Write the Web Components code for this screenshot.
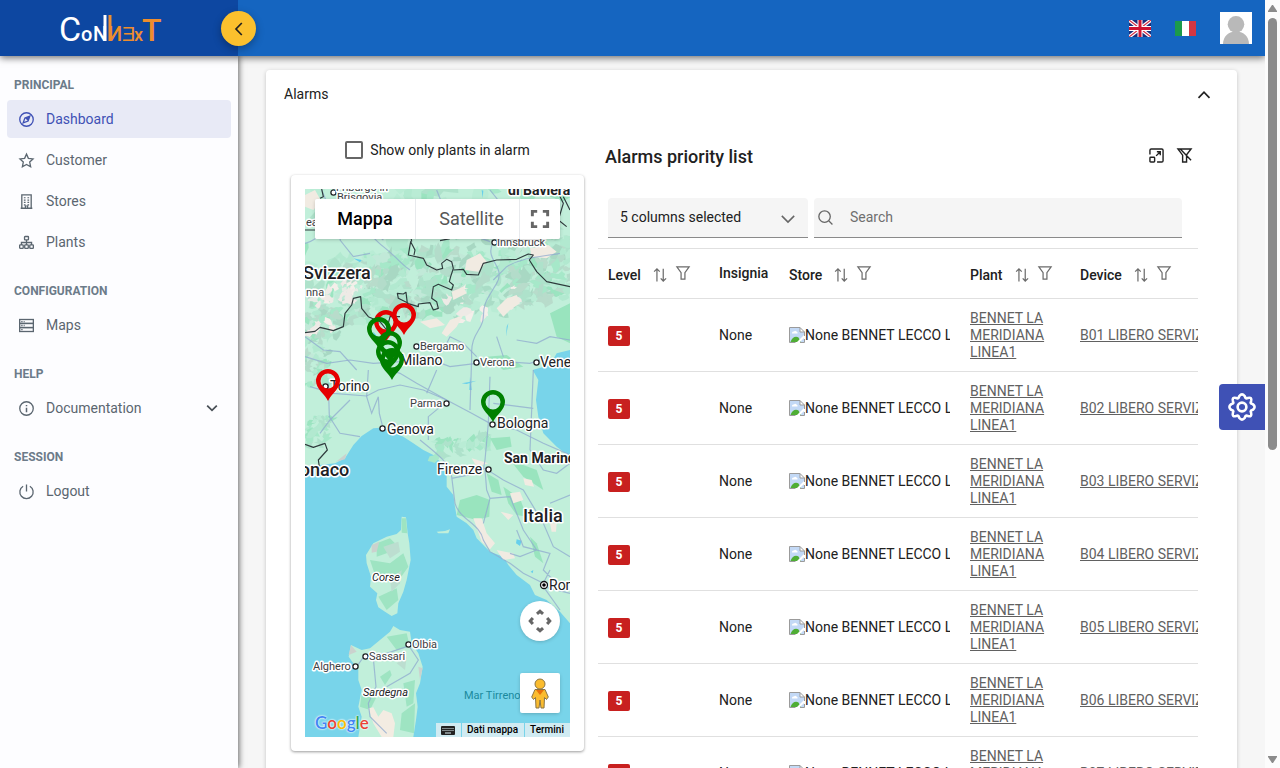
<!DOCTYPE html>
<html lang="en">
<head>
<meta charset="utf-8">
<meta name="viewport" content="width=device-width, initial-scale=1">
<title>Connext</title>
<style>
  html, body { margin: 0; height: 100%; }
  body { font: 14px/17px Roboto, "Liberation Sans", sans-serif; color: #212121; background: #f6f6f6; overflow: hidden; }
</style>
</head>
<body>
<app-shell>
  <app-header slot="header"></app-header>
  <side-nav slot="nav">
    <nav-section label="PRINCIPAL">
      <nav-item icon="compass" active>Dashboard</nav-item>
      <nav-item icon="star">Customer</nav-item>
      <nav-item icon="building">Stores</nav-item>
      <nav-item icon="sitemap">Plants</nav-item>
    </nav-section>
    <nav-section label="CONFIGURATION">
      <nav-item icon="server">Maps</nav-item>
    </nav-section>
    <nav-section label="HELP">
      <nav-item icon="info" expandable>Documentation</nav-item>
    </nav-section>
    <nav-section label="SESSION">
      <nav-item icon="power">Logout</nav-item>
    </nav-section>
  </side-nav>
  <expansion-panel heading="Alarms">
    <plants-panel></plants-panel>
    <alarms-panel></alarms-panel>
  </expansion-panel>
  <settings-button slot="overlay"></settings-button>
  <page-scrollbar slot="scrollbar"></page-scrollbar>
</app-shell>

<script>
const define = (name, html, setup) => {
  const template = document.createElement('template');
  template.innerHTML = html;
  customElements.define(name, class extends HTMLElement {
    constructor() {
      super();
      this.attachShadow({ mode: 'open' }).append(template.content.cloneNode(true));
    }
    connectedCallback() { if (setup) setup(this, this.shadowRoot); }
  });
};

/* ---- icons, each on a 16 unit grid ---- */
const ICONS = {
  compass: '<circle cx="8" cy="8" r="7.2"/><path d="M11.6 4.4 9.7 9.7 4.4 11.6 6.3 6.3Z"/><path d="M6.3 6.3 9.7 9.7 11.6 4.4Z" fill="currentColor" stroke="none"/>',
  star: '<path d="M8 1.2 10 5.7 15 6.3 11.4 9.7 12.4 14.7 8 12.2 3.6 14.7 4.6 9.7 1 6.3 6 5.7Z"/>',
  building: '<path d="M3 15V1H13V15M1.8 15.2H14.2"/><path d="M5.2 4H7M9 4H10.8M5.2 6.5H7M9 6.5H10.8M5.2 9H7M9 9H10.8M5.2 11.5H7M9 11.5H10.8M6.8 15V12.8H9.2V15" stroke-width="1.3"/>',
  sitemap: '<rect x="5.9" y="1.6" width="4.2" height="3.6" rx=".6"/><rect x=".7" y="10.6" width="3.8" height="3.6" rx=".6"/><rect x="6.1" y="10.6" width="3.8" height="3.6" rx=".6"/><rect x="11.5" y="10.6" width="3.8" height="3.6" rx=".6"/><path d="M8 5.2V10.6M2.6 10.6V8H13.4V10.6"/>',
  server: '<rect x=".7" y="1.6" width="14.6" height="4.2"/><rect x=".7" y="5.8" width="14.6" height="4.4"/><rect x=".7" y="10.2" width="14.6" height="4.2"/><path d="M2.4 3.8H3.8M2.4 8H3.8M2.4 12.3H3.8M5 3.8H6M5 8H6" stroke-width="1.4"/>',
  info: '<circle cx="8" cy="8" r="7.2"/><path d="M8 7.2V12M8 4.2V5.6" stroke-width="1.6"/>',
  power: '<path d="M8 .6V8M4.4 2.4A7.1 7.1 0 1 0 11.6 2.4"/>',
  down: '<path d="M2.5 5.2 8 10.7 13.5 5.2"/>',
  up: '<path d="M2.5 10.8 8 5.2 13.5 10.8"/>',
  left: '<path d="M10.8 2 5 8 10.8 14"/>',
  search: '<circle cx="7" cy="7" r="6.1"/><path d="M11.4 11.4 15.4 15.4"/>',
  sort: '<path d="M4.5 15.3V1.2M1.3 4.2 4.5 1 7.7 4.2M11.7.8V14.8M8.8 11.9 11.7 14.9 15 11.9"/>',
  filter: '<path d="M1 1H15L10.2 7.6V15H5.8V7.6Z"/>',
  filterOff: '<path d="M1 1H15L10.2 7.2V15H6V7.6Z M3.2.8 15 13"/>',
  expand: '<path d="M1 6.8V2.4Q1 1 2.4 1H13.6Q15 1 15 2.4V13.6Q15 15 13.6 15H8.6"/><rect x="1" y="9.8" width="5" height="5.2" rx=".8"/><path d="M7.6 8.4 12 4M8.4 4H12V7.8"/>',
  cog: '<circle cx="8" cy="8" r="2.5"/><path d="M6.5 1.7Q8-.1 9.5 1.7L10 2.8Q10.5 3.3 11.4 2.8 13.8 2.2 13.2 4.6 12.7 5.5 13.2 6L14.3 6.5Q16.1 8 14.3 9.5L13.2 10Q12.7 10.5 13.2 11.4 13.8 13.8 11.4 13.2 10.5 12.7 10 13.2L9.5 14.3Q8 16.1 6.5 14.3L6 13.2Q5.5 12.7 4.6 13.2 2.2 13.8 2.8 11.4 3.3 10.5 2.8 10L1.7 9.5Q-.1 8 1.7 6.5L2.8 6Q3.3 5.5 2.8 4.6 2.2 2.2 4.6 2.8 5.5 3.3 6 2.8Z"/>',
  fullscreen: '<path d="M1.2 5.5V1.2H5.5M10.5 1.2H14.8V5.5M14.8 10.5V14.8H10.5M5.5 14.8H1.2V10.5"/>',
  pan: '<path d="M5.8 2.8 8 .9 10.2 2.8M5.8 13.2 8 15.1 10.2 13.2M2.8 5.8.9 8 2.8 10.2M13.2 5.8 15.1 8 13.2 10.2"/>'
};
define('ui-icon', `
  <style>
    :host { display: inline-block; flex: none; width: var(--size, 15px); height: var(--size, 15px); }
    svg { display: block; width: 100%; height: 100%; overflow: visible; fill: none; stroke: currentColor; stroke-width: var(--stroke, 1.4); }
  </style>
  <svg viewBox="0 0 16 16" aria-hidden="true"></svg>`,
  (el, root) => { root.querySelector('svg').innerHTML = ICONS[el.getAttribute('name')] || ''; });

/* ---- page frame ---- */
define('app-shell', `
  <style>
    :host { display: grid; grid-template-columns: minmax(0, 1fr) 15px; height: 100vh; }
    .app { position: relative; display: grid; grid-template-columns: 238px minmax(0, 1fr); grid-template-rows: 56px minmax(0, 1fr); overflow: hidden; }
    slot[name=header]::slotted(*) { grid-column: 1 / -1; z-index: 3; }
    slot[name=nav]::slotted(*) { z-index: 2; }
    main { overflow-y: auto; scrollbar-width: none; padding: 14px 28px; }
  </style>
  <div class="app">
    <slot name="header"></slot>
    <slot name="nav"></slot>
    <main><slot></slot></main>
    <slot name="overlay"></slot>
  </div>
  <slot name="scrollbar"></slot>`);

define('page-scrollbar', `
  <style>
    :host { display: flex; flex-direction: column; align-items: center; justify-content: space-between; background: #fcfcfc; padding: 5px 0; box-sizing: border-box; }
    svg { display: block; fill: #8b8b8b; }
    .track { flex: 1; width: 9px; margin: 6px 0; }
    .thumb { height: 59%; border-radius: 5px; background: #8b8b8b; }
  </style>
  <svg width="9" height="7" viewBox="0 0 9 7" aria-hidden="true"><path d="M4 0H5L9 6V7H0V6Z"/></svg>
  <div class="track"><div class="thumb"></div></div>
  <svg width="9" height="7" viewBox="0 0 9 7" aria-hidden="true"><path d="M0 0H9V1L5 7H4L0 1Z"/></svg>`);

define('app-header', `
  <style>
    :host { display: grid; grid-template-columns: 238px minmax(0, 1fr); background: #1565c0; box-shadow: 0 2px 7px rgba(0,0,0,.55); }
    .brand { position: relative; display: flex; justify-content: center; align-items: center; background: #0d47a1; padding-right: 18px; }
    .brand svg { display: block; overflow: visible; }
    .collapse { position: absolute; right: -18px; top: 11px; width: 35px; height: 35px; border: 0; border-radius: 50%; padding: 0; display: grid; place-items: center; background: #fbc02d; color: #212121; box-shadow: 0 3px 8px rgba(0,0,0,.3); --size: 16px; --stroke: 1.7; }
    .tools { display: flex; align-items: center; justify-content: flex-end; padding-right: 13px; gap: 24px; }
    .tools button { border: 0; padding: 0; background: none; display: block; }
    .tools svg { display: block; }
    .text { font-family: Roboto, sans-serif; font-weight: 500; }
  </style>
  <div class="brand">
    <svg width="100" height="32" viewBox="0 0 100 32" role="img" aria-label="Connext">
      <g class="text" font-size="20">
        <g fill="#fff">
          <text x="-1" y="29" font-size="34" font-weight="400">C</text><text x="21" y="29">o</text><text x="33" y="29">N</text>
        </g>
        <g fill="#ee8d2e">
          <text x="48" y="29">И</text><text x="62" y="29">Ǝ</text><text x="74" y="29" font-size="18">x</text><text x="82" y="29" font-size="32">T</text>
        </g>
      </g>
      <path d="M45 3V29" stroke="#fff" stroke-width="3"/><path d="M50 3V29" stroke="#ee8d2e" stroke-width="3"/>
    </svg>
    <button class="collapse" aria-label="Collapse menu"><ui-icon name="left"></ui-icon></button>
  </div>
  <div class="tools">
    <button aria-label="English">
      <svg width="22" height="17" viewBox="0 0 22 17"><path fill="#1b2f7b" d="M0 0H22V17H0Z"/><path d="M0 0 22 17M22 0 0 17" stroke="#fff" stroke-width="3.6"/><path d="M0 0 22 17M22 0 0 17" stroke="#d22f46" stroke-width="1.2"/><path d="M11 0V17M0 8.5H22" stroke="#fff" stroke-width="5"/><path d="M11 0V17M0 8.5H22" stroke="#cf1431" stroke-width="3"/></svg>
    </button>
    <button aria-label="Italiano">
      <svg width="21" height="15" viewBox="0 0 21 15"><path fill="#1b9a4b" d="M0 0H7V15H0Z"/><path fill="#fff" d="M7 0H14V15H7Z"/><path fill="#d33643" d="M14 0H21V15H14Z"/></svg>
    </button>
    <button aria-label="Profile">
      <svg width="32" height="32" viewBox="0 0 32 32"><path fill="#fff" d="M0 0H32V32H0Z"/><g fill="#b9b9b9"><circle cx="16" cy="12.3" r="8.3"/><path d="M3 32C3 24 9 19.500 16 19.500S29 24 29 32Z"/></g></svg>
    </button>
  </div>`);

/* ---- navigation ---- */
define('side-nav', `
  <style>
    :host { display: block; background: #fdfdff; padding: 14px 7px; box-shadow: 1px 0 6px rgba(0,0,0,.6); }
    nav { display: flex; flex-direction: column; gap: 15px; }
  </style>
  <nav aria-label="Main"><slot></slot></nav>`);
define('nav-section', `
  <style>
    :host { display: block; }
    h2 { margin: 0; padding-left: 7px; font-size: 12px; line-height: 30px; font-weight: 700; color: #6c7b89; }
    div { display: flex; flex-direction: column; gap: 3px; }
  </style>
  <h2></h2><div><slot></slot></div>`,
  (el, root) => { root.querySelector('h2').textContent = el.getAttribute('label'); });
define('nav-item', `
  <style>
    :host { display: block; color: #5b6670; }
    a { display: flex; align-items: center; height: 38px; padding: 0 12px; gap: 12px; border-radius: 4px; color: inherit; text-decoration: none; }
    .label { flex: 1; }
    :host([active]) { color: #3f51b5; }
    :host([active]) a { background: #e8eaf6; }
    .more { display: none; --stroke: 2; --size: 14px; color: #495057; }
    :host([expandable]) .more { display: block; }
  </style>
  <a href="#"><ui-icon class="lead"></ui-icon><span class="label"><slot></slot></span><ui-icon class="more" name="down"></ui-icon></a>`,
  (el, root) => {
    const lead = document.createElement('ui-icon');
    lead.setAttribute('name', el.getAttribute('icon'));
    root.querySelector('.lead').replaceWith(lead);
  });

/* ---- expansion panel ---- */
define('expansion-panel', `
  <style>
    :host { display: block; background: #fff; border-radius: 4px; box-shadow: 0 1px 4px rgba(0,0,0,.2); }
    button { display: flex; justify-content: space-between; align-items: center; width: 100%; height: 49px; padding: 0 25px 0 18px; border: 0; background: none; font: inherit; color: #212121; --size: 16px; --stroke: 1.7; }
    .body { display: grid; grid-template-columns: 293px minmax(0, 1fr); gap: 14px; align-items: start; padding: 6px 39px 25px 25px; }
  </style>
  <button aria-expanded="true"><span></span><ui-icon name="up"></ui-icon></button>
  <div class="body"><slot></slot></div>`,
  (el, root) => { root.querySelector('span').textContent = el.getAttribute('heading'); });

define('plants-panel', `
  <style>
    :host { display: block; }
    label { display: flex; align-items: center; justify-content: center; gap: 7px; height: 50px; }
    input { appearance: none; width: 18px; height: 18px; margin: 0; border: 2px solid #666; border-radius: 2px; background: #fff; }
    .card { padding: 14px; border-radius: 4px; background: #fff; box-shadow: 0 1px 3px rgba(0,0,0,.4); }
  </style>
  <label><input type="checkbox">Show only plants in alarm</label>
  <div class="card"><plants-map></plants-map></div>`);

/* ---- map ---- */
const facets = () => {
  let seed = 7;
  const rnd = () => (seed = (seed * 16807) % 2147483647) / 2147483647;
  const patch = (cx, cy, w, h, n, colors, size) => {
    let out = '';
    for (let i = 0; i < n; i++) {
      const x = cx + (rnd() - .5) * w, y = cy + (rnd() - .5) * h - (x - cx) * .12;
      const t = (rnd() - .7) * 2.4, scale = size * (.6 + rnd() * .8);
      let d = '';
      for (let k = 0; k < 9; k++) {
        const a = k / 9 * 6.283, r = scale * (.3 + rnd() * .9);
        const px = Math.cos(a) * r * 1.2, py = Math.sin(a) * r * .7;
        d += (k ? 'L' : 'M') + Math.round(x + px * Math.cos(t) - py * Math.sin(t)) + ' ' + Math.round(y + px * Math.sin(t) + py * Math.cos(t));
      }
      out += `<path d="${d}Z" fill="${colors[Math.floor(rnd() * colors.length)]}"/>`;
    }
    return out;
  };
  const green = ['#a6e8c9', '#9be4c0', '#b2e9d0', '#aee2cb', '#b9ecd5'];
  const alps = [...green, '#b8dccb', '#a8d8c3', '#c1e9d8', '#b3dcca'];
  return patch(440, 110, 800, 200, 60, green, 30)
    + patch(440, 330, 800, 200, 420, alps, 22)
    + patch(90, 470, 120, 90, 45, alps, 16)
    + patch(75, 590, 80, 110, 34, alps, 15)
    + patch(90, 780, 80, 90, 26, green, 15)
    + patch(140, 370, 150, 60, 20, ['#f4efea', '#eeeae6', '#e6ebe5'], 15)
    + patch(95, 470, 90, 40, 10, ['#f4efea', '#eeeae6'], 15)
    + patch(570, 400, 220, 100, 22, ['#f4efea', '#eeeae6', '#a9dcc6'], 16)
    + patch(510, 825, 170, 60, 30, green, 17);
};
const LABELS = [
  ['Friburgo in', 31, 2, 's'], ['Brisgovia', 32, 12, 's'], ['di Baviera', 203, 6, 'b'], ['Svizzera', -2, 90, 'c'],
  ['nna', 1, 107, 's'], ['Innsbruck', 192, 57, 's'], ['ea', 1, 37, 's'], ['Bergamo', 115, 161, 's'], ['Milano', 95, 176, 'l'],
  ['Verona', 175, 177, 's'], ['Venezia', 235, 178, 'l'], ['Torino', 25, 202, 'l'], ['Parma', 105, 218, 's'],
  ['Bologna', 192, 239, 'l'], ['Genova', 82, 245, 'l'], ['Monaco', -21, 287, 'c'], ['Firenze', 132, 285, 'l'],
  ['San Marino', 199, 274, 'b'], ['Italia', 218, 333, 'c'], ['Corse', 67, 392, 's i'], ['Roma', 244, 401, 'l'],
  ['Olbia', 107, 459, 's'], ['Sassari', 64, 471, 's'], ['Alghero', 8, 481, 's'], ['Sardegna', 58, 507, 's i'],
  ['Mar Tirreno', 159, 510, 's w']
];
const TOWNS = [[28, 3], [189, 53], [111, 157], [171, 173], [231, 173], [20, 197], [141, 214], [187, 235], [77, 239], [183, 280], [103, 455], [60, 467], [50, 477]];
const PINS = [[23, 212, '#e50000'], [81, 153, '#e50000'], [99, 146, '#e50000'], [74, 160, 'green'], [85, 174, 'green'], [83, 183, 'green'], [87, 191, 'green'], [188, 233, 'green']];
define('plants-map', `
  <style>
    :host { display: block; position: relative; height: 548px; overflow: hidden; background: #78d4ea; }
    .map { display: block; width: 100%; height: 100%; }
    text { font-family: Roboto, sans-serif; fill: #202124; stroke: #fff; stroke-width: 3px; stroke-linejoin: round; paint-order: stroke; }
    .s { font-size: 11px; fill: #3c4043; }
    .l { font-size: 14px; fill: #202124; } .b { font-size: 14px; font-weight: 700; } .c { font-size: 18px; font-weight: 500; }
    .i { font-style: italic; fill: #202124; } .w { fill: #1b8a9e; stroke: none; }
    .types { position: absolute; left: 10px; top: 10px; right: 10px; display: grid; grid-template-columns: 100px 1fr 40px; gap: 1px; height: 40px; box-shadow: 0 1px 4px -1px rgba(0,0,0,.3); background: #e8eaed; border-radius: 2px; overflow: hidden; }
    button { border: 0; padding: 0; background: #fff; font: 400 18px/40px Roboto, sans-serif; color: #565656; display: grid; place-items: center; }
    .types button[aria-pressed=true] { font-weight: 500; color: #000; }
    .types button[aria-pressed=false] { padding-left: 8px; }
    .types ui-icon { --size: 18px; --stroke: 2.6; color: #666; }
    .controls { position: absolute; right: 10px; bottom: 24px; display: grid; gap: 32px; }
    .controls button { width: 40px; height: 40px; border-radius: 2px; box-shadow: 0 1px 4px -1px rgba(0,0,0,.3); }
    .controls .pan { border-radius: 50%; --size: 22px; --stroke: 2.2; color: #666; }
    .legal { position: absolute; right: 0; bottom: 0; display: flex; gap: 1px; font-size: 10px; line-height: 14px; color: #000; }
    .legal > * { padding: 0 6px 0 5px; background: rgba(245,245,245,.7); color: inherit; text-decoration: none; display: flex; align-items: center; height: 14px; box-sizing: border-box; font: inherit; font-weight: 500; }
    .google { position: absolute; left: 10px; bottom: 4px; font: 600 17px/20px Lato, sans-serif; text-shadow: 0 0 2px #fff, 0 0 2px #fff; }
  </style>
  <svg class="map" role="img" aria-label="Map of plants">
    <g transform="translate(-15 -19) scale(.33333)">
      <path fill="#c1efda" d="M45 50H840V540L800 550 780 585 728 600 745 630 738 690 745 740 760 790 800 830 840 860V1360L810 1325 770 1290 735 1275 720 1245 680 1215 655 1185 640 1160 600 1145 585 1130 560 1105 550 1080 530 1060 500 1040 495 1010 490 975 470 950 470 915 455 880 430 855 400 840 370 820 340 800 300 780 270 773 250 775 215 798 190 825 165 865 135 880 90 885 45 898Z"/>
      <g id="relief"></g>
      <g fill="#99e4be">
        <path d="M510 990 560 975 600 990 598 1040 560 1050 500 1035Z"/><path d="M590 910 625 930 635 975 605 965Z"/><path d="M640 950 690 985 710 1040 680 1035 655 1000Z"/><path d="M600 805 660 800 665 830 620 840Z"/><path d="M720 1100 740 1120 760 1180 735 1160Z"/><path d="M590 560 650 555 700 590 640 600Z"/><path d="M780 430 840 400V520L800 500Z"/><path d="M660 870 740 900 760 960 700 920Z"/>
      </g>
      <g fill="#f1ebe2"><path d="M530 270 570 250 590 275 565 305 525 300Z"/><path d="M720 235 775 225 800 245 770 265 725 260Z"/><path d="M620 415 650 385 680 375 690 400 660 420 640 440Z"/><path d="M45 75 75 60 95 95 70 120 45 110Z"/><path d="M660 970 690 965 700 990 670 1000Z"/><path d="M632 1025 670 1035 655 1050Z"/><path d="M550 1045 575 1045 590 1090 615 1120 600 1138 575 1115Z"/><path d="M620 1140 670 1150 675 1165 640 1170Z"/><path d="M700 925 725 930 732 950 705 945Z"/><path d="M780 1060 800 1060 798 1085 785 1085Z"/><path d="M545 865 595 880 560 890Z"/><path d="M485 365 520 350 530 370 490 390Z"/><path d="M390 455 440 445 465 465 420 475Z"/><path d="M455 490 480 450 520 435 500 470 470 500Z"/></g>
      <path fill="#c1efda" d="M335 1040 348 1042 353 1090 358 1120 362 1170 350 1230 340 1265 325 1300 322 1330 305 1338 285 1325 265 1312 258 1290 262 1270 240 1250 243 1220 230 1180 228 1155 250 1120 290 1100 320 1092 333 1080ZM310 1368 330 1380 360 1385 365 1420 385 1450 398 1490 390 1540 378 1570 383 1610 378 1650 370 1701H205L215 1640 205 1610 215 1560 205 1530 205 1500 190 1480 176 1460 183 1425 215 1440 240 1435 270 1410 300 1385ZM440 1085 465 1083 480 1078 475 1090 445 1090Z"/>
      <g fill="#9ee4c2"><path d="M335 1045 348 1045 352 1090 335 1088Z"/><path d="M260 1120 300 1105 320 1125 290 1150 260 1160Z"/><path d="M240 1170 300 1180 340 1150 355 1190 320 1240 260 1230Z"/><path d="M265 1280 320 1255 325 1290 290 1320Z"/><path d="M290 1400 350 1390 360 1430 320 1440Z"/><path d="M270 1520 300 1500 305 1515 285 1545Z"/><path d="M340 1540 375 1530 370 1600 350 1610Z"/><path d="M215 1570 260 1580 240 1620 210 1610Z"/><path d="M335 1630 375 1600 372 1690 330 1680Z"/></g>
      <g fill="#bcded0"><path d="M280 1130 325 1115 330 1145 300 1165Z"/><path d="M300 1230 335 1200 330 1240 305 1265Z"/><path d="M320 1480 350 1460 345 1500Z"/></g>
      <g fill="#cbd2ce"><path d="M245 1125 268 1115 260 1145 245 1148Z"/><path d="M176 1455 183 1425 200 1445Z"/><path d="M385 1490 398 1495 390 1530Z"/><path d="M138 875 170 850 165 868Z"/></g>
      <path fill="#f3ece2" d="M235 1615 250 1612 265 1640 280 1620 305 1630 315 1660 310 1701H275L250 1660Z"/>
      <path fill="#66cfec" d="M190 265 215 270 210 277ZM250 485 262 500 258 520 250 505ZM575 60 580 62 578 85ZM650 470 655 460 648 500ZM515 640 560 632 530 642ZM540 620 545 660 538 660ZM680 1108 695 1112 690 1128 678 1120ZM722 1205 730 1200 728 1210ZM190 100 208 110 205 125Z"/>
      <g fill="none" stroke="#8fa9cf" stroke-width="3.5" stroke-opacity=".75">
        <path d="M45 220C90 210 100 170 150 150S230 190 280 230 330 280 360 300M95 60 120 120 170 160 150 210 190 260 240 250M440 60 460 110 520 130 560 200 600 215M600 60 640 110 700 90M180 60 200 140 280 210"/>
        <path d="M610 215C580 270 650 290 620 340S580 400 580 440 540 490 545 560L540 720M810 250C760 260 700 260 650 290L610 330"/>
        <path d="M45 560 110 580 180 570 250 580 330 575 400 560 480 590 560 580 640 575 720 580 780 560M60 650 130 670 230 678 265 660 330 645 400 660 470 690 545 730 600 760 680 780 760 820 840 855"/>
        <path d="M115 640 118 740 150 790 210 800M90 790 120 750 180 690M235 600 230 680 245 730 265 680M265 680 268 730 278 770M300 600 330 610 380 640 470 690M440 600 410 670M470 695 415 740 415 810M600 620 595 760 585 870 580 900M730 600 725 720 720 840M610 700 730 715"/>
        <path d="M390 810C440 850 480 880 485 920L495 1000C510 1050 570 1060 580 1110L600 1145 660 1180M485 925 560 910 585 895 640 930 700 960 760 1060 790 1130 840 1160M585 900 590 960 600 985 580 1060M600 985 660 980 700 1080 740 1140M720 840 760 900 800 910 840 880M740 1140 690 1160 660 1150M780 1000 840 975M680 1080 700 1130 780 1150 760 1200 800 1240M660 1180 700 1210 760 1240 780 1200M760 1250 840 1270M760 1250 810 1320M45 500 100 540 150 545 200 600M680 510 740 520 780 500 840 510M460 540 480 500 520 520 560 560M620 500 640 560"/>
        <path d="M225 1455 200 1490M250 1465 258 1550 235 1600 240 1640 290 1690M355 1425 385 1470 360 1510 290 1550M230 1460 290 1450 350 1430" />
      </g>
      <g fill="none" stroke="#2f3b3d" stroke-width="3.5" stroke-linejoin="round">
        <path d="M45 488 75 484 90 472 130 482 160 470 165 430 185 405 190 385 212 380 215 415 235 440 270 455 290 480 300 440 330 440M355 400 325 385 322 370 340 372 348 367 352 400 385 410 385 402 420 398 430 420 445 415 440 395 425 385 430 350 445 343 485 360 490 345 478 335 482 320 490 295 485 275 470 268 455 280 458 295 440 300 410 285 400 265 355 255 362 215 375 240 372 255"/>
        <path d="M490 300 520 298 530 313 565 315 580 280 620 270 680 268 715 252 730 255 718 270 740 305 770 335 840 350M95 57 100 80 90 85M45 180 75 180M45 823 70 832 105 820 112 840 85 870 88 890M800 60 820 100 805 150 830 170M820 80 840 120M280 190 330 200 360 180 365 215M450 212 480 206"/>
      </g>
    </g>
    <g id="towns" fill="#fff" stroke="#202124" stroke-width="1.3"></g>
    <circle cx="239" cy="396" r="3.5" fill="#fff" stroke="#111" stroke-width="1.3"/><circle cx="239" cy="396" r="1.8"/>
    <g id="labels"></g>
    <g id="pins"></g>
  </svg>
  <div class="types">
    <button aria-pressed="true">Mappa</button><button aria-pressed="false">Satellite</button>
    <button aria-label="Fullscreen"><ui-icon name="fullscreen"></ui-icon></button>
  </div>
  <div class="controls">
    <button class="pan" aria-label="Camera controls"><ui-icon name="pan"></ui-icon></button>
    <button aria-label="Street View">
      <svg width="18" height="31" viewBox="0 0 18 31"><g fill="#fbbc2e" stroke="#8a7444" stroke-width="1"><path d="M4 11.500H14L17.300 19 15.500 21.500 13.500 19.500 13 30H10L9 22 8 30H5L4.500 19.500 2.500 21.500.7 19Z"/><circle cx="9" cy="6" r="5"/></g><path fill="#e8710a" d="M5 12H13L9 17Z"/></svg>
    </button>
  </div>
  <div class="google" aria-label="Google"><span style="color:#4285f4">G</span><span style="color:#ea4335">o</span><span style="color:#fbbc05">o</span><span style="color:#4285f4">g</span><span style="color:#34a853">l</span><span style="color:#ea4335">e</span></div>
  <div class="legal">
    <button aria-label="Keyboard shortcuts"><svg width="14" height="9" viewBox="0 0 14 9"><rect width="14" height="9" rx="1" fill="#222"/><path d="M1.500 2.500H13M1.500 4.500H13" stroke="#dceef2" stroke-dasharray="1 1"/><path d="M4 7H10" stroke="#dceef2"/></svg></button>
    <button>Dati mappa</button><a href="#">Termini</a>
  </div>`,
  (el, root) => {
    root.querySelector('#relief').innerHTML = facets();
    root.querySelector('#towns').innerHTML = TOWNS.map(([x, y]) => `<circle cx="${x + .5}" cy="${y + .5}" r="2.6"/>`).join('');
    root.querySelector('#labels').innerHTML = LABELS.map(([t, x, y, c]) => `<text class="${c}" x="${x}" y="${y}">${t}</text>`).join('');
    root.querySelector('#pins').innerHTML = PINS.map(([x, y, c]) =>
      `<path transform="translate(${x} ${y})" fill="${c}" fill-rule="evenodd" d="M0 0C-3-7-12-12-12-20A12 12 0 0 1 12-20C12-12 3-7 0 0ZM0-27.500A7.500 7.500 0 0 0 0-12.500 7.500 7.500 0 0 0 0-27.500Z"/>`).join('');
  });

/* ---- alarms list ---- */
define('alarms-panel', `
  <style>
    :host { display: block; overflow: hidden; }
    header { display: flex; align-items: center; justify-content: space-between; height: 64px; padding: 0 6px 0 7px; margin-bottom: 9px; }
    h1 { margin: 0; font-size: 18px; line-height: 24px; font-weight: 500; }
    .actions { display: flex; gap: 13px; }
    header button { border: 0; padding: 0; background: none; display: block; color: #212121; --stroke: 1.5; --size: 15px; }
    .tools { display: grid; grid-template-columns: 200px minmax(0, 1fr); gap: 6px; padding: 0 16px 0 10px; margin-bottom: 10px; }
    .field { position: relative; }
    select, input { appearance: none; box-sizing: border-box; width: 100%; height: 40px; border: 0; border-bottom: 1px solid #8a8a8a; border-radius: 4px 4px 0 0; background: #f5f5f5; font: inherit; color: #212121; display: block; margin: 0; }
    select { padding: 0 12px; }
    input { padding: 0 12px 2px 36px; }
    input::placeholder { color: #6f6f6f; opacity: 1; }
    .field ui-icon { position: absolute; top: 12px; color: #666; pointer-events: none; }
    .field .chev { right: 11px; --size: 18px; --stroke: 1.4; } .field .glass { left: 4px; }
  </style>
  <header>
    <h1>Alarms priority list</h1>
    <div class="actions">
      <button aria-label="Open full list"><ui-icon name="expand"></ui-icon></button>
      <button aria-label="Clear filters"><ui-icon name="filterOff"></ui-icon></button>
    </div>
  </header>
  <div class="tools">
    <div class="field"><select aria-label="Columns"><option>5 columns selected</option></select><ui-icon class="chev" name="down"></ui-icon></div>
    <div class="field"><input type="text" aria-label="Search" placeholder="Search"><ui-icon class="glass" name="search"></ui-icon></div>
  </div>
  <alarms-table></alarms-table>`);

define('broken-image', `
  <style>:host { display: inline-block; width: 16px; height: 16px; vertical-align: -3px; } svg { display: block; }</style>
  <svg width="16" height="16" viewBox="0 0 16 16" aria-hidden="true">
    <path fill="#c3d9f6" d="M1 1H11L15 5V15H1Z"/><path fill="#fff" d="M3 6Q3 4 5 4.500 6 3 7.500 4.500 9 5 8.500 6.500H3Z"/><path fill="#4fae35" d="M1.500 15C3 10 7 8.500 9.500 10.500L12 15Z"/>
    <path fill="#fff" d="M16 7 7 16H10L16 10Z"/><path fill="#fff" d="M11 1V5H15Z"/><path fill="none" stroke="#9b9b9b" d="M6.500 15.500H.5V.5H11L15.500 5V9M11 .5V5H15.500M11 15.500H15.500V12"/>
  </svg>`);

define('alarms-table', `
  <style>
    :host { display: block; overflow: hidden; border-top: 1px solid #e0e0e0; }
    table { table-layout: fixed; border-collapse: separate; border-spacing: 0; width: 100%; min-width: 752px; }
    th, td { box-sizing: border-box; padding: 0 10px; text-align: left; border-bottom: 1px solid #e0e0e0; white-space: nowrap; overflow: hidden; }
    th { height: 50px; font-weight: 500; color: #212121; }
    td { height: 73px; }
    .head { display: flex; align-items: center; }
    .sortable { padding-top: 3px; }
    .head button { border: 0; background: none; padding: 0 0 2px; display: block; color: #6b6b6b; --size: 14px; }
    .head .sort { margin: 0 9px 0 12px; padding: 2px 0 0; }
    .badge { display: block; width: 22px; height: 20px; margin-top: 2px; border-radius: 2px; background: #c8201f; color: #fff; font-size: 12px; line-height: 20px; font-weight: 700; text-align: center; }
    .clip { overflow: hidden; }
    .wrap { white-space: normal; }
    a { color: #616161; }
  </style>
  <table>
    <colgroup><col style="width:111px"><col style="width:70px"><col style="width:181px"><col style="width:110px"><col></colgroup>
    <thead><tr></tr></thead>
    <tbody></tbody>
  </table>`,
  (el, root) => {
    const tools = name => `<button class="sort" aria-label="Sort by ${name}"><ui-icon name="sort"></ui-icon></button><button aria-label="Filter ${name}"><ui-icon name="filter"></ui-icon></button>`;
    root.querySelector('thead tr').innerHTML = ['Level', 'Insignia', 'Store', 'Plant', 'Device']
      .map(n => n === 'Insignia' ? `<th scope="col">${n}</th>` : `<th scope="col"><div class="head sortable">${n}${tools(n)}</div></th>`).join('');
    root.querySelector('tbody').innerHTML = [1, 2, 3, 4, 5, 6, 7, 8].map(n => `
      <tr><td><span class="badge">5</span></td><td>None</td>
      <td><div class="clip"><broken-image></broken-image>None BENNET LECCO LA MERIDIANA</div></td>
      <td class="wrap"><a href="#">BENNET LA MERIDIANA LINEA1</a></td>
      <td><a href="#">B0${n} LIBERO SERVIZIO</a></td></tr>`).join('');
  });

define('settings-button', `
  <style>
    :host { position: absolute; right: 0; top: 50%; z-index: 4; }
    button { display: grid; place-items: center; width: 46px; height: 46px; border: 0; padding: 0; border-radius: 4px 0 0 4px; background: #3f51b5; color: #fff; --size: 28px; --stroke: 1.5; }
  </style>
  <button aria-label="Settings"><ui-icon name="cog"></ui-icon></button>`);
</script>
</body>
</html>
